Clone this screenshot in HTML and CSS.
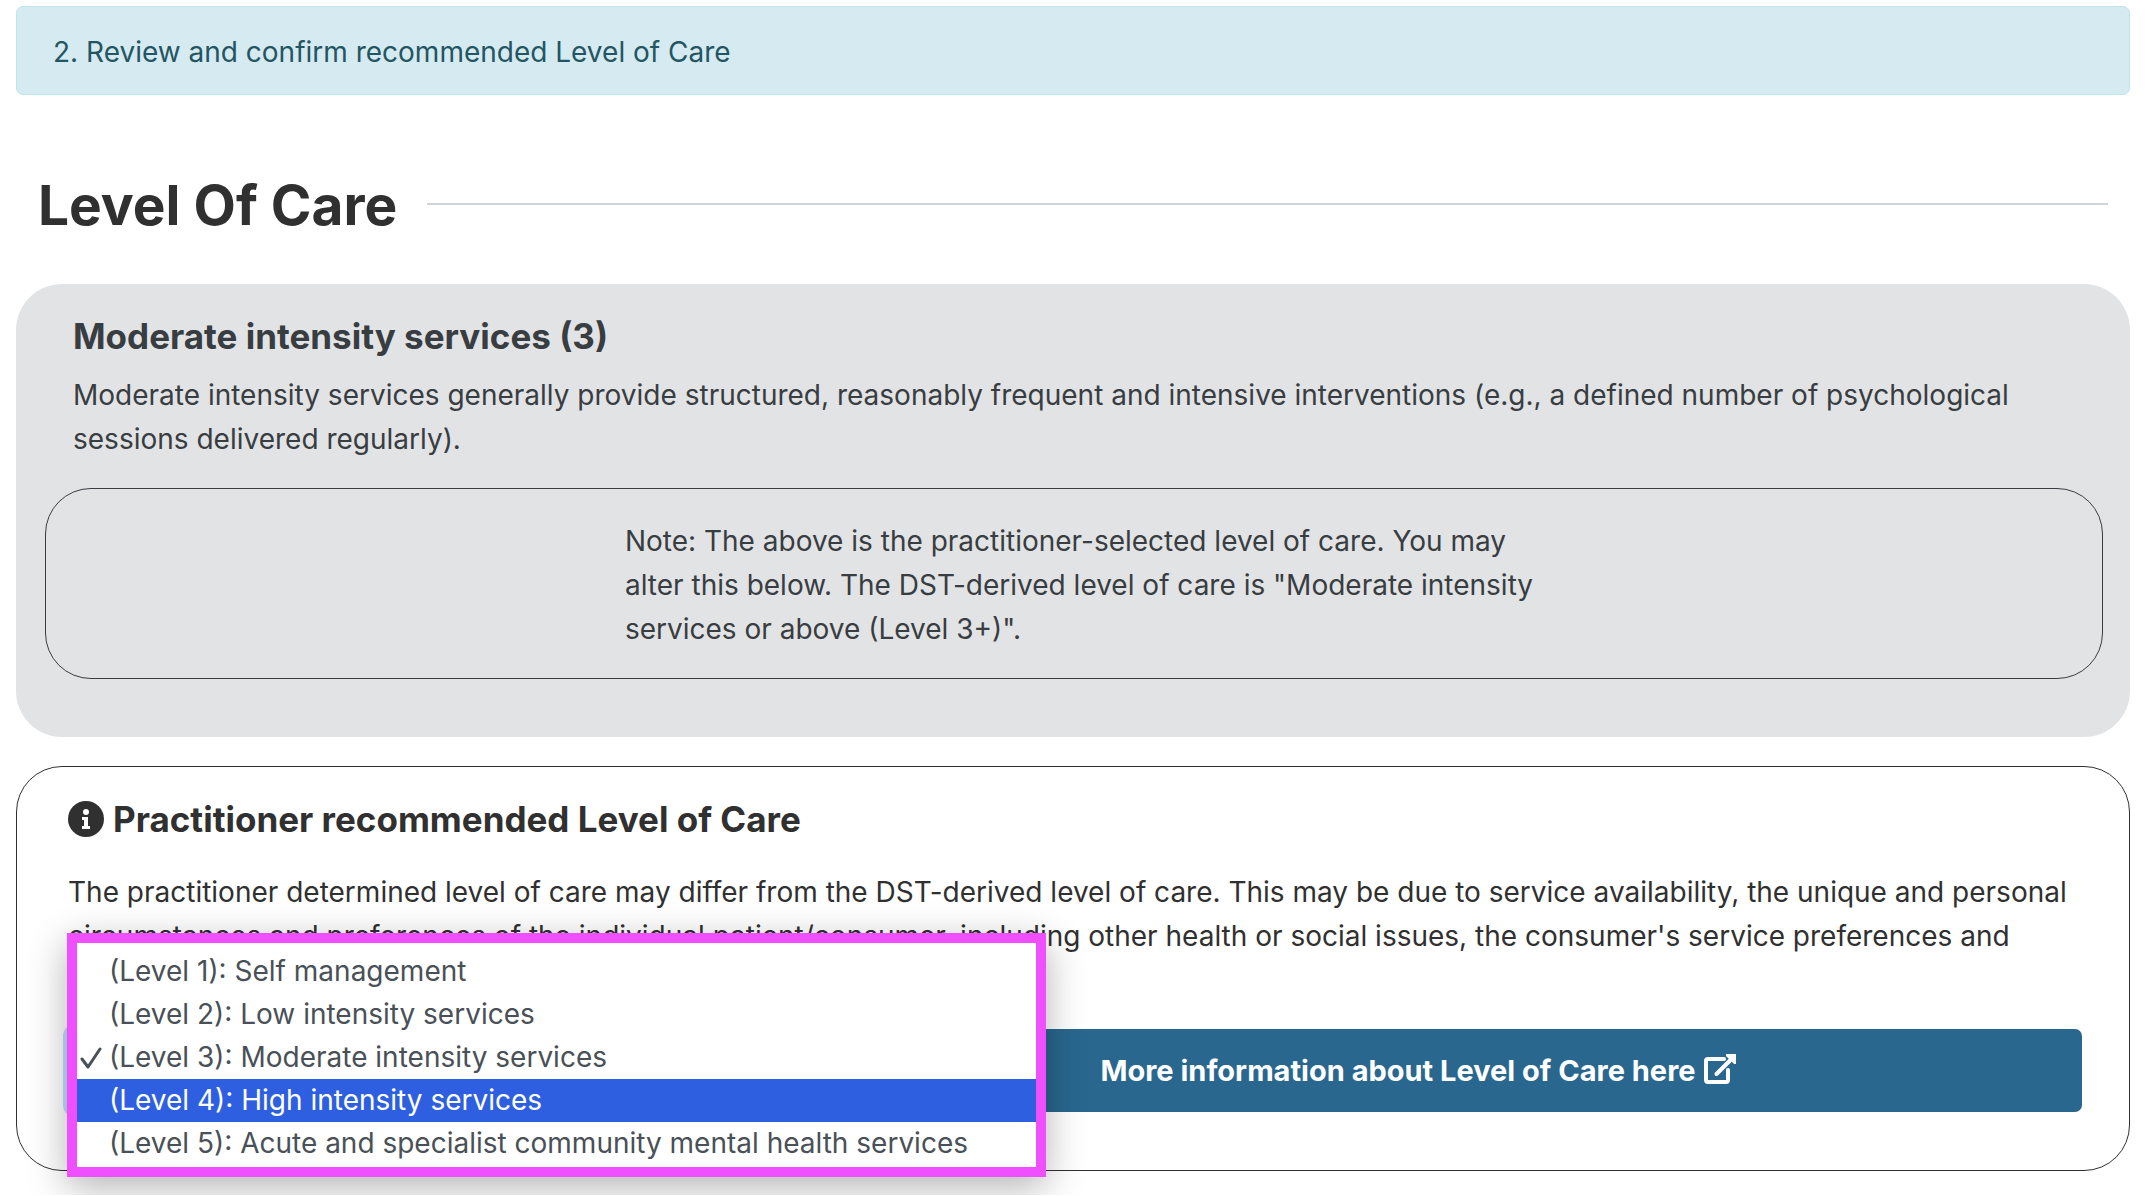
FILE: index.html
```html
<!DOCTYPE html>
<html lang="en">
<head>
<meta charset="utf-8">
<meta name="viewport" content="width=device-width, initial-scale=1">
<title>Level Of Care</title>
<link rel="stylesheet" href="styles.css">
</head>
<body>
<main class="page">
  <p class="step-banner">2. Review and confirm recommended Level of Care</p>

  <header class="section-header">
    <h1 class="section-title">Level Of Care</h1>
    <hr class="section-rule">
  </header>

  <section class="result-card">
    <div class="result-summary">
      <h2 class="card-title">Moderate intensity services (3)</h2>
      <p class="card-text">Moderate intensity services generally provide structured, reasonably frequent and intensive interventions (e.g., a defined number of psychological sessions delivered regularly).</p>
    </div>
    <div class="note">
      <p class="note-text">Note: The above is the practitioner-selected level of care. You may alter this below. The DST-derived level of care is "Moderate intensity services or above (Level 3+)".</p>
    </div>
  </section>

  <section class="choice-card">
    <h2 class="card-title choice-title">
      <svg class="info-icon" viewBox="0 0 36 36" aria-hidden="true">
        <circle cx="18" cy="18" r="18" fill="currentColor"/>
        <circle cx="18" cy="11" r="3" fill="#fff"/>
        <path d="M14 16h6v9h2v3h-8v-3h2v-6h-2z" fill="#fff"/>
      </svg>
      <span>Practitioner recommended Level of Care</span>
    </h2>
    <p class="card-text choice-text">The practitioner determined level of care may differ from the DST-derived level of care. This may be due to service availability, the unique and personal circumstances and preferences of the individual patient/consumer, including other health or social issues, the consumer's service preferences and</p>
    <div class="controls">
      <div class="picker">
        <select class="picker-select" aria-label="Practitioner recommended Level of Care">
          <option>(Level 3): Moderate intensity services</option>
        </select>
        <ul class="menu" role="listbox" aria-label="Level of Care">
          <li class="menu-item" role="option">(Level 1): Self management</li>
          <li class="menu-item" role="option">(Level 2): Low intensity services</li>
          <li class="menu-item" role="option" aria-selected="true">
            <svg class="check-icon" viewBox="0 0 22 22" aria-hidden="true"><path d="M2 12l6 8L20 2" fill="none" stroke="currentColor" stroke-width="3" stroke-linecap="round" stroke-linejoin="round"/></svg>(Level 3): Moderate intensity services</li>
          <li class="menu-item menu-item-active" role="option">(Level 4): High intensity services</li>
          <li class="menu-item" role="option">(Level 5): Acute and specialist community mental health services</li>
        </ul>
      </div>
      <a class="more-link" href="#more">
        <span>More information about Level of Care here</span>
        <svg class="external-icon" viewBox="0 0 32 30" aria-hidden="true">
          <path d="M20 5H4Q2 5 2 7V26Q2 28 4 28H22Q24 28 24 26V16" fill="none" stroke="currentColor" stroke-width="4" stroke-linecap="round"/>
          <path d="M12.500 20L27 5.500" fill="none" stroke="currentColor" stroke-width="4" stroke-linecap="round"/>
          <path d="M22 0h10v10h-2l-8-8z" fill="currentColor"/>
        </svg>
      </a>
    </div>
  </section>
</main>
</body>
</html>
```
FILE: styles.css
```css
* {
  box-sizing: border-box;
}

body {
  margin: 0;
  background: #fff;
  color: #303030;
  font-family: Inter, "Liberation Sans", sans-serif;
  font-size: 28px;
  line-height: 44px;
}

h1,
h2,
p {
  margin: 0;
}

.page {
  padding: 6px 18px 24px 16px;
}

.step-banner {
  padding: 23px 36px 20px;
  border: 1px solid #bee5eb;
  border-radius: 7px;
  background: #d6eaf1;
  color: #235662;
}

.section-header {
  display: flex;
  align-items: center;
  gap: 30px;
  padding: 72px 22px 43px;
}

.section-title {
  padding-top: 2px;
  font-size: 55px;
  font-weight: 700;
  line-height: 72px;
}

.section-rule {
  flex: 1;
  height: 2px;
  margin: 0;
  border: 0;
  background: #ced4da;
}

.result-card {
  padding: 30px 27px 58px 29px;
  border-radius: 46px;
  background: #e2e3e5;
  color: #383d41;
}

.result-summary {
  padding: 0 28px;
}

.card-title {
  font-size: 35px;
  font-weight: 700;
  line-height: 44px;
}

.result-summary .card-text {
  margin-top: 15px;
}

.note {
  display: flex;
  justify-content: center;
  margin-top: 27px;
  padding: 30px 30px 27px;
  border: 1px solid #383d41;
  border-radius: 46px;
}

.note-text {
  width: 47%;
  padding-left: 20px;
}

.choice-card {
  margin-top: 29px;
  padding: 30px 47px 58px 51px;
  border: 1px solid #303030;
  border-radius: 46px;
}

.choice-title {
  display: flex;
  align-items: center;
  gap: 9px;
}

.info-icon {
  width: 36px;
  height: 36px;
}

.choice-text {
  min-height: 132px;
  margin-top: 29px;
}

.controls {
  display: grid;
  grid-template-columns: 1fr 2fr;
  gap: 22px;
  margin-top: 27px;
}

.picker {
  position: relative;
}

.picker-select {
  width: 100%;
  height: 83px;
  padding: 0 22px;
  border: 1px solid #80bdff;
  border-radius: 7px;
  outline: 5px solid #bfdeff;
  background: #fff;
  color: #495057;
  font: inherit;
}

.menu {
  position: absolute;
  top: -96px;
  left: -1px;
  margin: 0;
  padding: 7px 0 2px;
  border: 10px solid #f04fff;
  background: #fff;
  box-shadow: 0 10px 36px rgba(0, 0, 0, 0.3);
  color: #495057;
  line-height: 43px;
  list-style: none;
  white-space: nowrap;
}

.menu-item {
  position: relative;
  padding: 0 68px 0 32px;
}

.menu-item-active {
  background: #2d5fe0;
  color: #fff;
}

.check-icon {
  position: absolute;
  top: 11px;
  left: 3px;
  width: 22px;
  height: 22px;
}

.more-link {
  display: flex;
  align-items: center;
  justify-content: center;
  gap: 8px;
  padding: 19px;
  border-radius: 7px;
  background: #29678f;
  color: #fff;
  font-size: 29px;
  font-weight: 700;
  text-decoration: none;
}

.external-icon {
  width: 32px;
  height: 30px;
  margin-bottom: 4px;
}
```
